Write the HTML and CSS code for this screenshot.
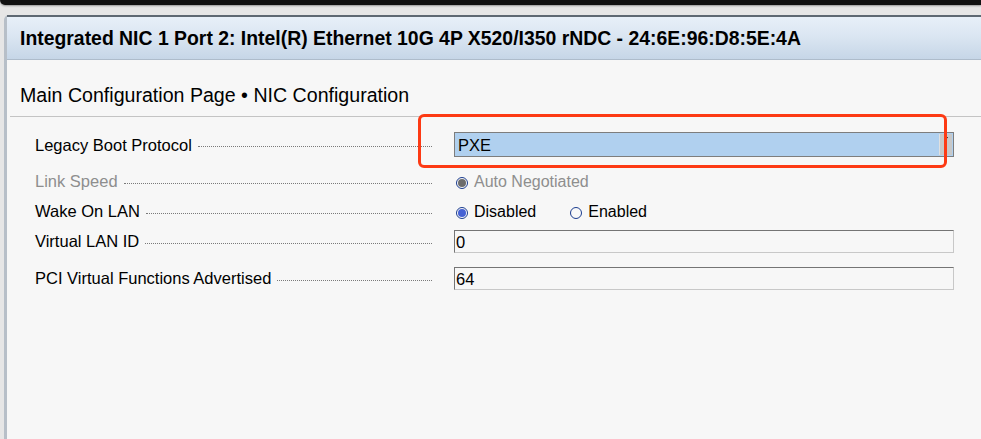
FILE: index.html
```html
<!DOCTYPE html>
<html>
<head>
<meta charset="utf-8">
<link rel="stylesheet" href="styles.css">
</head>
<body>
<div class="topbar"></div>
<div class="panel">
  <div class="header">Integrated NIC 1 Port 2: Intel(R) Ethernet 10G 4P X520/I350 rNDC - 24:6E:96:D8:5E:4A</div>
  <div class="subtitle">Main Configuration Page • NIC Configuration</div>
  <div class="rule"></div>
  <div class="form">
    <div class="row row-first">
      <div class="label"><span>Legacy Boot Protocol</span><i class="leader"></i></div>
      <div class="value">
        <div class="select"><span class="select-text">PXE</span><span class="select-btn"><span class="arrow"></span></span></div>
      </div>
      <div class="highlight"></div>
    </div>
    <div class="row row-second">
      <div class="label disabled"><span>Link Speed</span><i class="leader"></i></div>
      <div class="value">
        <label class="radio disabled"><span class="dot checked"></span>Auto Negotiated</label>
      </div>
    </div>
    <div class="row">
      <div class="label"><span>Wake On LAN</span><i class="leader"></i></div>
      <div class="value">
        <label class="radio"><span class="dot checked"></span>Disabled</label>
        <label class="radio"><span class="dot"></span>Enabled</label>
      </div>
    </div>
    <div class="row">
      <div class="label"><span>Virtual LAN ID</span><i class="leader"></i></div>
      <div class="value"><div class="input">0</div></div>
    </div>
    <div class="row row-last">
      <div class="label"><span>PCI Virtual Functions Advertised</span><i class="leader"></i></div>
      <div class="value"><div class="input">64</div></div>
    </div>
  </div>
</div>
</body>
</html>
```

FILE: styles.css
```css
html, body {
  margin: 0;
  padding: 0;
}
body {
  background: #e6e6e6;
  font-family: "Liberation Sans", Arial, sans-serif;
  color: #000;
  width: 981px;
  height: 439px;
  overflow: hidden;
}
.topbar {
  height: 5px;
  background: #111;
  border-bottom-left-radius: 5px;
  margin-bottom: 10px;
  box-shadow: 0 1px 2px rgba(0,0,0,0.35);
}
.panel {
  margin-left: 4px;
  height: 424px;
  background: #f7f7f7;
  border-left: 3px solid #b7bfc8;
  border-top-left-radius: 5px;
  box-sizing: border-box;
}
.header {
  height: 45px;
  box-sizing: border-box;
  border-top: 2px solid #5e6872;
  border-bottom: 1px solid #aebccb;
  background: linear-gradient(#e7eff8, #dbe6f2 45%, #c6d6e7);
  padding-left: 13px;
  padding-top: 3px;
  font-weight: bold;
  font-size: 19.4px;
  line-height: 36px;
  white-space: nowrap;
}
.subtitle {
  padding-left: 13px;
  height: 56px;
  line-height: 70px;
  font-size: 19.6px;
  white-space: nowrap;
}
.rule {
  margin-left: 3px;
  height: 1px;
  background: #c4c4c4;
}
.form {
  padding-left: 28px;
}
.row {
  position: relative;
  display: flex;
  align-items: center;
  height: 30px;
  font-size: 16.5px;
}
.row-first {
  margin-top: 12px;
  height: 31px;
}
.row-second {
  margin-top: 6px;
}
.row-last {
  margin-top: 7px;
}
.label {
  flex: 0 0 397px;
  display: flex;
  align-items: center;
  white-space: nowrap;
  padding-top: 1px;
}
.label.disabled {
  color: #8e8e8e;
}
.leader {
  flex: 1;
  margin-left: 6px;
  margin-top: 3px;
  height: 0;
  border-bottom: 1px dotted #7a7a7a;
}
.value {
  margin-left: 22px;
  width: 500px;
  display: flex;
  align-items: center;
}
.select {
  box-sizing: border-box;
  width: 500px;
  height: 25px;
  border: 1px solid #7d7d7d;
  background: #b0d0ef;
  display: flex;
  align-items: stretch;
}
.select-text {
  flex: 1;
  padding-left: 3px;
  line-height: 24px;
  font-size: 16.5px;
}
.select-btn {
  width: 12px;
  margin: 1px 1px 1px 0;
  background: #c8c8c8;
  border-left: 1px solid #e0e0e0;
  position: relative;
}
.arrow {
  position: absolute;
  left: 4px;
  top: 3px;
  width: 0;
  height: 0;
  border-left: 2px solid transparent;
  border-right: 2px solid transparent;
  border-top: 3px solid #000;
}
.highlight {
  position: absolute;
  left: 383px;
  top: -15px;
  width: 523px;
  height: 48px;
  border: 3px solid #fd3a14;
  border-radius: 6px;
  pointer-events: none;
}
.radio {
  display: flex;
  align-items: center;
  white-space: nowrap;
  margin-left: 2px;
  font-size: 16px;
  padding-top: 1px;
}
.radio + .radio {
  margin-left: 34px;
}
.radio.disabled {
  color: #8e8e8e;
}
.dot {
  box-sizing: border-box;
  width: 12px;
  height: 12px;
  border-radius: 50%;
  border: 1px solid #1b3d8f;
  background: #f9f9f9;
  margin-right: 6px;
  margin-top: 2px;
  position: relative;
}
.dot.checked::after {
  content: "";
  position: absolute;
  left: 1px;
  top: 1px;
  width: 8px;
  height: 8px;
  border-radius: 50%;
  background: #4561d4;
}
.radio.disabled .dot.checked::after {
  background: #6d6d6d;
}
.input {
  box-sizing: border-box;
  width: 500px;
  height: 23px;
  border-top: 1px solid #757575;
  border-left: 1px solid #757575;
  border-right: 1px solid #c8c8c8;
  border-bottom: 1px solid #c8c8c8;
  background: #f7f7f7;
  padding-left: 1px;
  line-height: 22px;
  font-size: 16.5px;
}
```
